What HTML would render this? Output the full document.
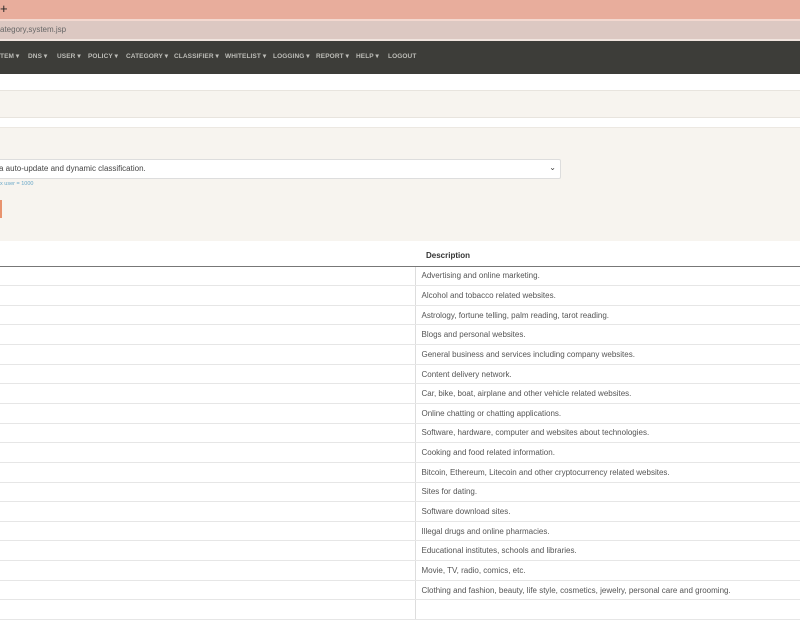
<!DOCTYPE html>
<html><head><style>
*{margin:0;padding:0;box-sizing:border-box}
body{width:800px;height:600px;overflow:hidden;background:#fff;font-family:"Liberation Sans",sans-serif;position:relative}
.a{position:absolute;left:0;width:800px}
.nav span{position:absolute;top:12px;font-size:6.5px;font-weight:bold;color:#bdbdb8;letter-spacing:.1px;line-height:8px;white-space:nowrap}
table{position:absolute;top:241px;left:0;width:800px;border-collapse:collapse;font-size:8px;color:#555}
td{height:19.65px;border-bottom:1px solid #e6e6e6;padding-left:6px}
td:first-child{width:415px;border-right:1px solid #ddd;padding:0}
th{height:25px;text-align:left;font-size:8px;color:#333;border-bottom:1.5px solid #777;padding-left:11px;padding-top:4px}
</style></head><body>
<div class="a" style="top:0;height:19px;background:#e8ad9c"></div>
<div style="position:absolute;left:0;top:1px;font-size:13px;color:#222">+</div>
<div class="a" style="top:19px;height:2px;background:#f3d8cf"></div>
<div class="a" style="top:21px;height:18px;background:#dcc8c2"></div>
<div style="position:absolute;left:0;top:25px;font-size:8px;color:#666">ategory,system.jsp</div>
<div class="a" style="top:39px;height:2px;background:#f0e4de"></div>
<div class="a nav" style="top:41px;height:33px;background:#3d3d39">
<span style="left:0">TEM ▾</span><span style="left:28px">DNS ▾</span><span style="left:57px">USER ▾</span><span style="left:88px">POLICY ▾</span><span style="left:126px">CATEGORY ▾</span><span style="left:174px">CLASSIFIER ▾</span><span style="left:225px">WHITELIST ▾</span><span style="left:273px">LOGGING ▾</span><span style="left:316px">REPORT ▾</span><span style="left:356px">HELP ▾</span><span style="left:388px">LOGOUT</span>
</div>
<div class="a" style="top:90px;height:1px;background:#e8e4de"></div>
<div class="a" style="top:91px;height:26px;background:#f7f4ef"></div>
<div class="a" style="top:117px;height:1px;background:#e8e4de"></div>
<div class="a" style="top:127px;height:114px;background:#f7f4ef;border-top:1px solid #ece8e2"></div>
<div style="position:absolute;left:-2px;top:159px;width:563px;height:20px;background:#fff;border:1px solid #ddd;border-radius:2px;font-size:8px;color:#444;padding:4px 0 0 0">a auto-update and dynamic classification.<span style="position:absolute;right:4px;top:3px;font-size:8px">⌄</span></div>
<div style="position:absolute;left:0;top:181px;font-size:5.5px;color:#6aa8c8">x user = 1000</div>
<div style="position:absolute;left:0;top:200px;width:2px;height:18px;background:#e8936e"></div>
<table>
<tr><th style="padding:0;border-right:none"></th><th>Description</th></tr>
<tr><td></td><td>Advertising and online marketing.</td></tr>
<tr><td></td><td>Alcohol and tobacco related websites.</td></tr>
<tr><td></td><td>Astrology, fortune telling, palm reading, tarot reading.</td></tr>
<tr><td></td><td>Blogs and personal websites.</td></tr>
<tr><td></td><td>General business and services including company websites.</td></tr>
<tr><td></td><td>Content delivery network.</td></tr>
<tr><td></td><td>Car, bike, boat, airplane and other vehicle related websites.</td></tr>
<tr><td></td><td>Online chatting or chatting applications.</td></tr>
<tr><td></td><td>Software, hardware, computer and websites about technologies.</td></tr>
<tr><td></td><td>Cooking and food related information.</td></tr>
<tr><td></td><td>Bitcoin, Ethereum, Litecoin and other cryptocurrency related websites.</td></tr>
<tr><td></td><td>Sites for dating.</td></tr>
<tr><td></td><td>Software download sites.</td></tr>
<tr><td></td><td>Illegal drugs and online pharmacies.</td></tr>
<tr><td></td><td>Educational institutes, schools and libraries.</td></tr>
<tr><td></td><td>Movie, TV, radio, comics, etc.</td></tr>
<tr><td></td><td>Clothing and fashion, beauty, life style, cosmetics, jewelry, personal care and grooming.</td></tr>
<tr><td></td><td></td></tr>
</table>
</body></html>
